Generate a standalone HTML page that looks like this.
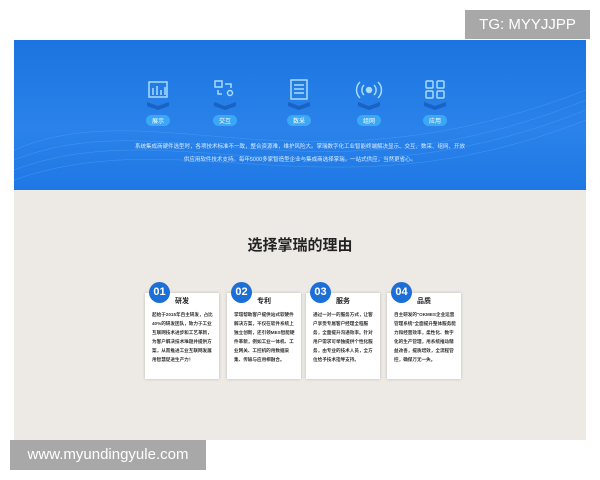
<!DOCTYPE html>
<html><head><meta charset="utf-8"><style>
*{margin:0;padding:0;box-sizing:border-box}
body{width:600px;height:480px;background:#fff;position:relative;overflow:hidden;font-family:"Liberation Sans","Noto Sans CJK SC",sans-serif}
.blue{position:absolute;left:14px;top:40px;width:572px;height:150px;background:linear-gradient(180deg,#1c74e0 0%,#2a82ea 60%,#1f78e4 100%);overflow:hidden}
.gray{position:absolute;left:14px;top:190px;width:572px;height:250px;background:#edeae6}
.tg{position:absolute;left:465px;top:10px;width:125px;height:29px;background:#a8a8a8;color:#fff;font-size:15px;line-height:29px;text-align:center}
.url{position:absolute;left:10px;top:440px;width:196px;height:30px;background:#a8a8a8;color:#fff;font-size:15px;line-height:30px;text-align:center}
.ic{position:absolute;top:78px;width:40px;text-align:center}
.ic svg{display:block;margin:0 auto}
.ic .l{margin-top:3px;display:inline-block;background:#3aa8f4;color:#fff;font-size:6px;padding:1px 6px;border-radius:6px}
.desc{position:absolute;left:14px;top:141px;width:572px;text-align:center;color:#d8ecff;font-size:5.5px;line-height:13px}
h2{position:absolute;left:0;width:600px;top:234px;text-align:center;font-size:15px;font-weight:bold;color:#222}
.card{position:absolute;top:293px;width:74px;height:86px;background:#fff;box-shadow:0 0 3px rgba(0,0,0,.2);padding:17px 5px 0 7px;font-size:4.6px;line-height:9px;font-weight:bold;color:#333}
.n{position:absolute;left:4px;top:-11px;width:21px;height:21px;border-radius:50%;background:#1c6fd6;color:#fff;font-size:11px;line-height:21px;text-align:center;font-weight:bold}
.t{position:absolute;left:30px;top:4px;font-size:7px;font-weight:bold;color:#222}
</style></head><body>
<div class="blue">
<svg width="572" height="150" style="position:absolute;left:0;top:0" fill="none" stroke="#5aa6f4" stroke-width=".5" opacity=".6">
<path d="M0 120 C150 60 300 170 572 60"/><path d="M0 130 C160 70 310 175 572 70"/><path d="M0 140 C170 80 320 180 572 80"/><path d="M0 110 C140 50 290 160 572 50"/>
</svg>
</div>
<div class="gray"></div>
<div class="tg">TG: MYYJJPP</div>
<div class="url">www.myundingyule.com</div>
<div class="ic" style="left:138px"><svg width="30" height="32" fill="none" stroke="#a8dcff" stroke-width="1.5"><path d="M4 28 L15 32 L26 28 L26 24 L15 28 L4 24Z" fill="#1a62c4" stroke="none"/><rect x="6" y="4" width="18" height="15"/><path d="M10 17v-7M14 17v-9M18 17v-5M22 17v-8"/></svg><span class="l">展示</span></div>
<div class="ic" style="left:205px"><svg width="30" height="32" fill="none" stroke="#a8dcff" stroke-width="1.5"><path d="M4 28 L15 32 L26 28 L26 24 L15 28 L4 24Z" fill="#1a62c4" stroke="none"/><rect x="5" y="3" width="7" height="6"/><path d="M15 6h6v4M8 12v4h4"/><circle cx="20" cy="15" r="2.5"/></svg><span class="l">交互</span></div>
<div class="ic" style="left:279px"><svg width="30" height="32" fill="none" stroke="#a8dcff" stroke-width="1.5"><path d="M4 28 L15 32 L26 28 L26 24 L15 28 L4 24Z" fill="#1a62c4" stroke="none"/><rect x="7" y="2" width="16" height="19"/><path d="M10 7h10M10 11h10M10 15h10"/></svg><span class="l">数采</span></div>
<div class="ic" style="left:349px"><svg width="30" height="32" fill="none" stroke="#a8dcff" stroke-width="1.5"><path d="M4 28 L15 32 L26 28 L26 24 L15 28 L4 24Z" fill="#1a62c4" stroke="none"/><circle cx="15" cy="12" r="2.5" fill="#a8dcff"/><path d="M10 7a7 7 0 0 0 0 10M20 7a7 7 0 0 1 0 10M6 4a11 11 0 0 0 0 16M24 4a11 11 0 0 1 0 16"/></svg><span class="l">组网</span></div>
<div class="ic" style="left:415px"><svg width="30" height="32" fill="none" stroke="#a8dcff" stroke-width="1.5"><path d="M4 28 L15 32 L26 28 L26 24 L15 28 L4 24Z" fill="#1a62c4" stroke="none"/><rect x="6" y="3" width="7" height="7" rx="1"/><rect x="17" y="3" width="7" height="7" rx="1"/><rect x="6" y="13" width="7" height="7" rx="1"/><rect x="17" y="13" width="7" height="7" rx="1"/></svg><span class="l">应用</span></div>
<div class="desc">系统集成商硬件选型时，各项技术标准不一致，整合资源难，维护风险大。掌瑞数字化工业智能终端解决显示、交互、数采、组网、开放<br>供应用软件技术支持。每年5000多家智造型企业与集成商选择掌瑞，一站式供应，当然更省心。</div>
<h2>选择掌瑞的理由</h2>
<div class="card" style="left:145px"><div class="n">01</div><div class="t">研发</div>起始于2015年自主研发，占比40%的研发团队，致力于工业互联网技术进步和工艺革新，为客户解决技术难题并提供方案，从而推进工业互联网发展用智慧促进生产力！</div>
<div class="card" style="left:227px"><div class="n">02</div><div class="t">专利</div>掌瑞帮助客户提供站式软硬件解决方案，不仅在软件系统上独立创新，还引领MES智能硬件革新，例如工业一体机、工业网关、工控机的用数据采集、传输与应用相融合。</div>
<div class="card" style="left:306px"><div class="n">03</div><div class="t">服务</div>通过一对一的服务方式，让客户享受专属客户经理全程服务，全面提升沟通效率。针对用户需求可举独提供个性化服务，由专业的技术人员，全方位给予技术指导支持。</div>
<div class="card" style="left:387px"><div class="n">04</div><div class="t">品质</div>自主研发的"OKMES企业运营管理系统"全面提升整体服务能力和经营效率，柔性化、数字化的生产管理，用系统推动精益改善，提质增效，全流程管控，确保万无一失。</div>
</body></html>
